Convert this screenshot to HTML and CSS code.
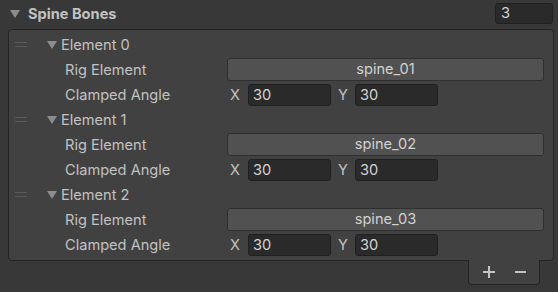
FILE: index.html
```html
<!DOCTYPE html>
<html lang="en">
<head>
  <meta charset="UTF-8">
  <title>Spine Bones</title>
  <link rel="stylesheet" href="styles.css">
</head>
<body>
<div class="inspector">
  <div class="header">
    <svg class="foldout" width="10" height="8" viewBox="0 0 10 8"><path d="M0 0H10L5 8Z"/></svg>
    <span class="title">Spine Bones</span>
    <div class="count">3</div>
  </div>

  <div class="list">
    <!-- Element 0 -->
    <div class="row element">
      <span class="handle"></span>
      <svg class="foldout" width="10" height="8" viewBox="0 0 10 8"><path d="M0 0H10L5 8Z"/></svg>
      <span>Element 0</span>
    </div>
    <div class="row prop">
      <span class="label">Rig Element</span>
      <div class="object">spine_01</div>
    </div>
    <div class="row prop">
      <span class="label">Clamped Angle</span>
      <span class="axis">X</span><div class="num">30</div>
      <span class="axis ay">Y</span><div class="num">30</div>
    </div>

    <!-- Element 1 -->
    <div class="row element">
      <span class="handle"></span>
      <svg class="foldout" width="10" height="8" viewBox="0 0 10 8"><path d="M0 0H10L5 8Z"/></svg>
      <span>Element 1</span>
    </div>
    <div class="row prop">
      <span class="label">Rig Element</span>
      <div class="object">spine_02</div>
    </div>
    <div class="row prop">
      <span class="label">Clamped Angle</span>
      <span class="axis">X</span><div class="num">30</div>
      <span class="axis ay">Y</span><div class="num">30</div>
    </div>

    <!-- Element 2 -->
    <div class="row element">
      <span class="handle"></span>
      <svg class="foldout" width="10" height="8" viewBox="0 0 10 8"><path d="M0 0H10L5 8Z"/></svg>
      <span>Element 2</span>
    </div>
    <div class="row prop">
      <span class="label">Rig Element</span>
      <div class="object">spine_03</div>
    </div>
    <div class="row prop">
      <span class="label">Clamped Angle</span>
      <span class="axis">X</span><div class="num">30</div>
      <span class="axis ay">Y</span><div class="num">30</div>
    </div>
  </div>

  <div class="footer">
    <div class="buttons">
      <svg class="btn" width="12" height="12" viewBox="0 0 12 12"><path d="M6 0V12M0 6H12"/></svg>
      <svg class="btn" width="11" height="12" viewBox="0 0 11 12"><path d="M0 6H11"/></svg>
    </div>
  </div>
</div>
</body>
</html>
```

FILE: styles.css
```css
* {
  margin: 0;
  padding: 0;
  box-sizing: border-box;
}

body {
  background: #383838;
  font-family: Inter, "Liberation Sans", sans-serif;
  font-size: 14.6px;
  color: #c2c2c2;
}

.foldout {
  fill: #8c8c8c;
  flex: none;
}

.header {
  height: 28px;
  display: flex;
  align-items: center;
  padding: 0 5px 1px 10px;
}

.header .title {
  font-weight: bold;
  margin-left: 8px;
  flex: 1;
}

.count {
  width: 58px;
  height: 21px;
  line-height: 19px;
  padding-left: 5px;
  background: #2a2a2a;
  border: 1px solid #202020;
  border-radius: 3px;
  color: #d2d2d2;
}

.list {
  margin: 1px 4px 0 8px;
  padding: 2px 0 3px;
  background: #414141;
  border: 1px solid #242424;
  border-radius: 4px;
}

.row {
  height: 25px;
  display: flex;
  align-items: center;
}

.element .handle {
  width: 12px;
  height: 5px;
  margin: 0 20px 0 6px;
  border-top: 1px solid #5a5a5a;
  border-bottom: 1px solid #5a5a5a;
}

.element .foldout {
  margin-right: 4px;
}

.prop {
  padding-left: 56px;
  padding-right: 9px;
}

.prop .label {
  width: 162px;
  flex: none;
}

.object {
  flex: 1;
  height: 23px;
  line-height: 21px;
  text-align: center;
  background: #515151;
  border: 1px solid #2f2f2f;
  border-radius: 3px;
  color: #d2d2d2;
}

.axis {
  width: 21px;
  padding-left: 3px;
  flex: none;
}

.axis.ay {
  margin-left: 4px;
  width: 20px;
  padding-left: 3px;
}

.num {
  width: 83px;
  height: 22px;
  line-height: 20px;
  padding-left: 4px;
  background: #2a2a2a;
  border: 1px solid #202020;
  border-radius: 3px;
  color: #d2d2d2;
}

.footer {
  display: flex;
  justify-content: flex-end;
  padding-right: 18px;
}

.buttons {
  width: 72px;
  height: 25px;
  margin-top: -1px;
  display: flex;
  justify-content: center;
  align-items: center;
  gap: 20px;
  background: #414141;
  border: 1px solid #242424;
  border-top: 0;
  border-radius: 0 0 4px 4px;
}

.btn {
  stroke: #c4c4c4;
  stroke-width: 2;
}
```
